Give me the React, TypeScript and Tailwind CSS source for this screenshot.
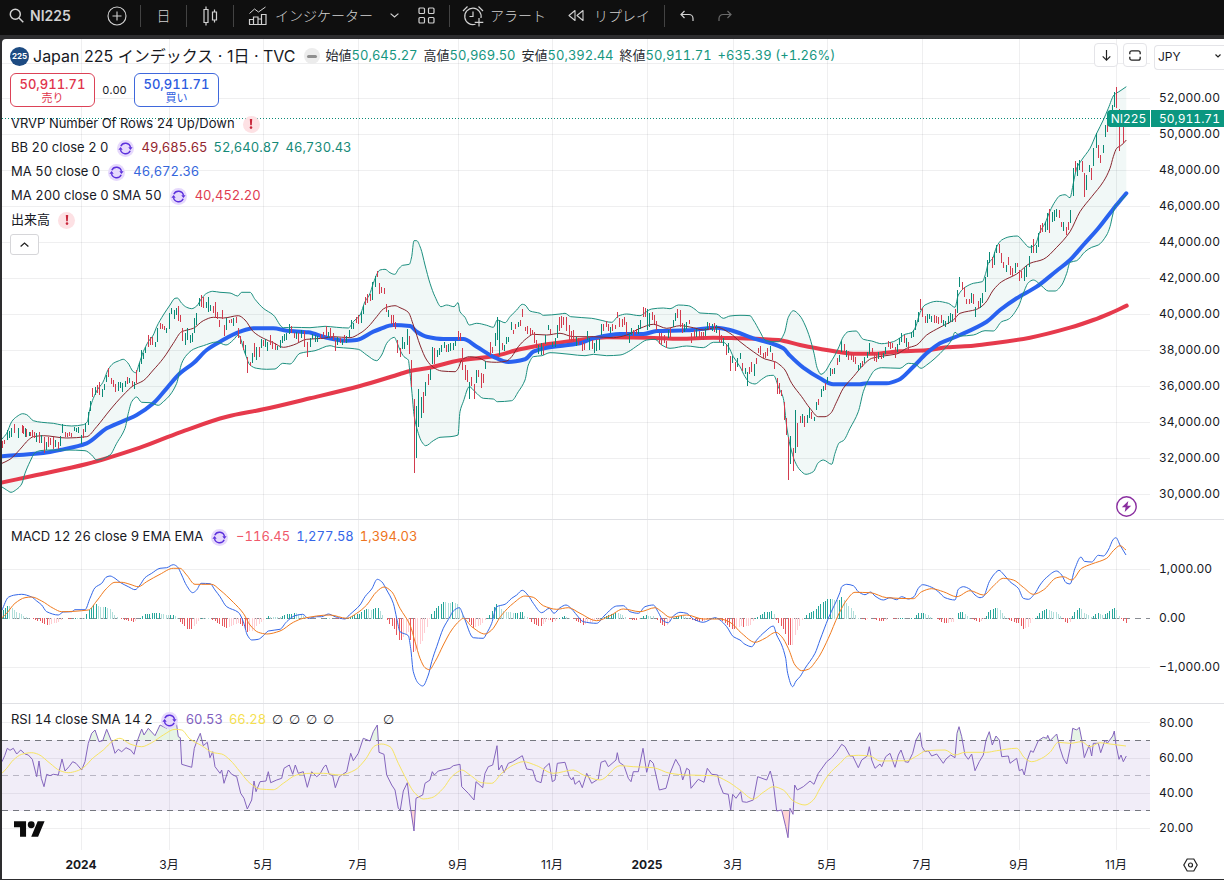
import React from 'react';

type Point = [number, number];
type Segment = [number, number, string];

/* Series are stored in thirds of a pixel, measured from each segment's origin. */
const decode = (segments: Segment[]): Point[] =>
  segments.flatMap(([ox, oy, data]) => {
    const n = data.trim().split(/[\s,]+/).map(Number);
    const out: Point[] = [];
    for (let i = 0; i + 1 < n.length; i += 2) out.push([ox + n[i] / 3, oy + n[i + 1] / 3]);
    return out;
  });

const toPath = (points: Point[]) =>
  points.map(([x, y], i) => `${i ? 'L' : 'M'}${x.toFixed(1)} ${y.toFixed(1)}`).join('');

/* Monotone cubic curve: rounds the corners without overshooting the samples. */
const toCurve = (points: Point[]) => {
  const n = points.length;
  const slope = points.slice(1).map(([x, y], i) => (y - points[i][1]) / (x - points[i][0] || 1));
  const tangent = points.map((_, i) => {
    if (i === 0) return slope[0];
    if (i === n - 1) return slope[n - 2];
    const a = slope[i - 1];
    const b = slope[i];
    return a * b <= 0 ? 0 : (2 * a * b) / (a + b);
  });
  let d = `M${points[0][0].toFixed(1)} ${points[0][1].toFixed(1)}`;
  for (let i = 1; i < n; i++) {
    const [x0, y0] = points[i - 1];
    const [x1, y1] = points[i];
    const h = (x1 - x0) / 3;
    d += `C${(x0 + h).toFixed(1)} ${(y0 + tangent[i - 1] * h).toFixed(1)} ${(x1 - h).toFixed(1)} ${(y1 - tangent[i] * h).toFixed(1)} ${x1.toFixed(1)} ${y1.toFixed(1)}`;
  }
  return d;
};

const valueAt = (points: Point[], x: number) => {
  for (let i = 1; i < points.length; i++) {
    const [x0, y0] = points[i - 1];
    const [x1, y1] = points[i];
    if (x <= x1) return y0 + ((y1 - y0) * (x - x0)) / (x1 - x0 || 1);
  }
  return points[points.length - 1][1];
};

const BARS: Segment[] = [
  [0, 260, 'r 8 543 565;r 14 540 553;g 22 510 540;g 28 512 535;g 34 505 530;r 42 492 520;g 55 505 533;r 66 495 520;r 70 497 522;g 75 505 530;r 80 508 530;g 87 515 528;r 92 515 528;r 97 510 530;r 103 515 533;g 109 520 545;r 118 515 550;g 125 525 550;r 133 530 578;g 140 545 570;r 146 530 560;r 152 535 555;r 160 530 568;g 166 540 562;r 174 545 568;g 180 528 558;g 187 492 520;r 196 515 532;r 202 518 530;r 208 515 528;r 213 518 530;g 222 500 513;g 229 503 515;g 235 500 520;g 245 525 553;r 250 508 535;g 257 490 515;g 265 457 495;g 272 423 453;r 278 385 410;g 285 380 405;r 291 375 400;r 298 365 405;g 307 388 412;g 313 372 390;g 319 345 365;r 325 325 350;r 334 353 372;r 340 360 382;r 346 372 395;g 355 365 392;g 361 365 385;g 368 370 397;g 376 362 382;r 382 352 372;g 388 355 368;r 396 363 378;g 403 365 387;r 409 330 368;g 418 308 335;g 425 270 312;g 431 280 298;g 437 262 280;r 446 225 260;r 451 230 255;r 457 232 255;g 466 245 262;g 472 205 245;r 480 190 208;r 487 192 206;r 493 198 210;g 499 203 220;g 508 160 208;g 515 145 162;g 522 150 178;g 528 145 165;r 535 138 182;r 541 165 186;r 547 205 243;g 556 218 255;g 563 205 240;g 570 225 248;g 577 218 245;g 584 175 218;g 590 160 195;g 599 115 137;r 605 105 140;r 611 112 145;g 619 125 145;g 626 110 155;g 631 135 152;r 640 138 158;r 646 125 175;r 652 155 177;r 658 180 200;r 667 150 178;r 673 195 227;g 680 175 210;r 688 180 190;r 694 178 190;g 700 175 198;r 710 170 190;r 715 205 235;r 722 228 252;r 730 243 270;g 736 255 285;r 742 290 338;r 750 305 318;g 757 280 308;r 763 250 290;g 770 262 300;r 778 262 292;g 785 237 265;r 791 240 258;g 797 237 262;g 803 245 272;r 810 225 255;r 818 243 268;r 825 248 270;g 832 258 270;g 840 240 265;g 847 228 250;g 853 222 243;g 860 218 240;g 867 192 222;r 874 198 218;r 882 218 235;g 889 215 237;r 896 220 245;g 905 210 235;r 914 212 262;r 922 245 290;g 931 235 262;g 938 222 238;g 945 225 245;g 953 228 245;r 962 222 238;r 970 215 232;r 979 198 228;g 985 215 235;r 992 205 235;r 1000 220 240;r 1006 240 272;g 1013 232 255;r 1020 233 250;g 1027 240 255;r 1034 225 245;g 1040 228 248;g 1047 210 232;g 1054 180 208;g 1061 190 208;r 1069 170 190;r 1076 165 192;g 1083 155 188;g 1090 138 162;r 1096 110 135;r 1103 103 128;r 1110 103 122;g 1118 65 120;g 1125 48 80;r 1132 33 50;r 1139 70 102'],
  [380, 230, 'r 4 172 188;r 13 175 193;r 20 222 247;g 26 240 260;r 34 255 282;r 41 255 290;r 46 275 298;r 52 330 368;r 61 355 380;g 68 322 357;g 74 335 358;g 82 298 345;r 88 318 373;r 94 390 470;r 103 507 728;g 109 527 683;g 115 478 590;g 124 500 563;r 130 487 550;g 136 457 497;r 145 432 465;g 152 418 450;g 157 350 402;r 163 353 402;g 172 360 380;g 179 355 375;g 185 345 365;g 193 335 355;r 200 345 367;g 206 342 365;g 212 338 362;g 220 340 360;g 227 333 348;r 235 303 330;r 241 308 333;r 247 355 420;r 256 405 450;r 262 420 455;g 268 455 508;r 274 440 468;r 283 463 507;g 289 420 458;r 295 420 440;r 305 430 475;r 310 432 460;g 317 393 418;r 331 335 375;r 337 350 370;g 346 310 348;g 352 262 330;g 358 270 375;r 367 340 360;g 373 345 363;g 379 320 342;g 385 322 335;g 394 275 300;r 400 300 312;r 406 283 298;g 415 275 292;r 421 270 288;r 427 237 260;r 436 290 303;r 442 288 312;r 450 295 315;r 457 300 315;r 463 305 338;r 469 330 355;g 475 345 372;g 484 340 375;r 490 340 375;g 496 315 342;g 505 285 300;r 511 298 312;g 518 335 350;g 526 325 352;g 533 285 325;r 539 260 302;r 545 258 295;r 551 262 285;r 560 260 302;r 568 285 330;r 574 302 332;r 580 300 335;g 588 320 348;r 596 325 345;r 607 335 362;r 614 340 360;g 622 303 330;g 628 325 360;r 636 330 358;g 643 338 370;g 650 330 362;g 657 328 360;g 665 283 315;r 671 283 303;r 679 272 290;r 685 282 302;g 691 292 308;r 697 283 303;r 706 285 298;r 713 247 265;r 719 263 292;r 727 268 292;r 733 262 285;r 740 275 312;g 748 310 340;g 755 295 315;r 761 300 318;r 769 298 312;g 775 285 312;g 782 270 297;r 791 232 260;r 797 235 262;g 803 237 300;g 809 250 290;r 817 245 270;r 823 255 283;r 829 272 300;r 838 310 343;r 845 310 345;r 852 315 340;r 859 333 355;g 865 300 325;r 871 295 322;g 880 270 292;g 886 250 272;r 893 237 265;r 901 240 290;r 907 280 308;g 913 283 305;g 920 275 298;r 928 270 282;r 935 310 338;r 942 300 325;g 949 298 322;r 957 302 325;r 964 305 328;r 970 305 330;g 976 293 318;g 983 275 298;r 989 280 300;g 996 283 302;r 1003 280 305;g 1010 285 310;r 1018 300 335;r 1024 315 340;g 1031 325 348;r 1039 345 375;g 1046 340 370;r 1051 378 422;g 1058 378 400;r 1066 395 422;g 1073 385 412;g 1081 370 388;r 1088 400 422;g 1095 415 432;g 1102 425 467;r 1109 412 432;r 1115 395 425;g 1123 403 437;r 1130 385 402;r 1135 355 370;r 1142 348 375;r 1150 368 385;r 1156 365 385;r 1163 355 378;g 1170 348 365;r 1178 370 390;r 1184 393 418;r 1193 445 492;r 1199 460 492'],
  [740, 230, 'r 124 480 498;r 133 515 570;r 139 565 615;r 145 620 750;g 151 617 702;r 160 655 722;g 166 540 668;r 172 578 650;r 181 558 580;g 187 552 578;r 193 558 592;g 202 555 578;g 208 533 565;r 215 545 568;g 223 560 573;g 229 515 540;r 235 508 525;g 244 477 502;g 250 468 482;r 256 460 480;g 262 440 458;g 271 415 438;r 277 418 433;g 283 413 433;r 292 385 405;g 298 375 397;g 305 333 365;r 313 342 362;g 319 360 380;r 326 363 390;r 334 372 390;r 340 375 395;r 347 380 403;g 355 405 423;g 361 400 415;r 367 392 410;g 373 380 400;g 381 365 385;g 388 338 372;r 396 355 375;r 403 370 392;r 409 372 395;g 415 365 388;r 423 368 388;g 430 370 385;g 437 350 372;r 445 333 352;r 451 335 358;r 458 338 355;r 466 350 385;g 473 342 365;g 478 325 345;g 485 310 335;r 492 315 340;g 499 325 350;r 506 335 360;g 513 305 325;g 520 300 320;g 527 270 300;g 535 245 275;r 541 207 240;r 548 235 260;r 556 258 280;g 562 253 278;g 569 252 268;g 575 257 275;r 582 255 280;r 589 258 280;r 596 260 282;r 604 255 278;g 610 270 288;g 617 272 290;g 625 258 283;g 632 250 275;g 638 252 275;r 646 237 275;g 653 180 250;g 658 142 170;r 667 157 180;r 673 172 200;r 680 208 222;r 688 208 222;g 694 188 218;r 700 192 222;g 706 230 260;r 715 212 235;g 721 205 235;g 727 188 218;g 736 140 185;g 742 90 140;g 748 65 98;r 757 82 115;g 763 65 105;g 770 45 68;r 778 42 70;r 784 68 100;r 790 95 115;g 799 105 127;r 805 82 105;r 811 108 135;r 817 113 138;g 825 98 130;r 832 100 112;r 838 120 152;r 845 122 145;g 853 115 152;g 859 105 140;g 868 78 112;g 873 45 70;r 880 28 68'],
  [960, 30, 'g 229 645 668;g 235 610 650;r 241 585 608;r 248 580 605;g 256 575 605;g 262 550 600;r 268 538 608;g 276 545 575;g 283 540 572;g 289 538 560;r 297 540 565;r 303 575 590;g 310 575 602;r 318 590 615;r 325 575 600;g 331 540 580;g 340 415 498;r 346 393 425;g 352 400 437;g 358 390 420;r 366 393 427;r 373 430 500;g 379 435 480;g 388 405 425;r 394 415 450;g 400 355 408;g 409 310 355;r 415 345 385;r 421 375 398;g 430 345 370;g 436 285 320;r 442 275 305;g 450 240 290;g 456 225 270;g 463 185 230;r 469 170 235;r 478 238 362;r 490 290 340'],
];

const barPath = (kind: string) =>
  BARS.map(([ox, oy, data]) =>
    data
      .split(';')
      .map((item) => item.trim().split(' '))
      .filter((item) => item[0] === kind)
      .map(([, x, top, bottom]) => {
        const px = ox + Math.floor(Number(x) / 3) + 0.5;
        return `M${px} ${Math.round(oy + Number(top) / 3)}V${Math.round(oy + Number(bottom) / 3)}`;
      })
      .join(''),
  ).join('');

const upper = decode([
  [0, 260, '6 537 20 520 35 485 50 470 68 461 80 464 100 482 125 487 160 490 185 495 215 498 250 494 262 485 270 445 280 415 293 388 308 368 325 328 340 310 355 303 370 298 383 308 400 335 407 338 418 310 430 275 445 245 460 225 470 200 490 165 510 135 525 115 532 114 545 130 560 142 575 146 590 138 605 115 620 100 638 94 660 97 690 99 713 108 725 97 750 97 765 118 790 145 820 165 850 203 880 202 930 203 975 199 1010 202 1045 204 1060 185 1080 165 1095 125 1108 105 1120 70 1132 40 1140 30 1155 28 1170 38 1183 43'],
  [380, 230, '45 133 55 118 68 106 88 103 95 80 102 32 110 32 122 55 135 105 150 160 165 200 183 230 200 225 222 230 234 218 240 245 255 262 268 285 290 280 320 286 340 292 352 270 375 278 390 260 410 240 427 223 435 225 450 243 480 250 490 256 540 252 555 250 572 260 635 265 660 270 695 277 715 258 740 252 780 257 795 248 815 237 850 234 870 236 895 225 925 227 945 238 960 249 1010 252 1030 265 1050 258 1080 256 1110 257 1120 270 1140 305 1155 330'],
  [740, 230, '90 335 115 335 133 310 145 262 160 242 180 258 195 285 210 325 222 370 232 415 243 433 255 425 270 400 285 375 297 350 310 320 325 305 348 303 370 328 395 333 425 341 460 335 478 325 495 313 515 308 527 290 540 248 555 225 590 214 625 220 645 232 655 195 675 172 700 160 727 155 737 130 745 100 758 85 770 50 785 30 810 20 832 18 850 35 868 52'],
  [960, 30, '225 645 240 605 255 580 270 543 285 515 300 497 315 494 330 503 340 460 350 415 365 390 390 355 410 310 430 270 445 235 462 195 480 183 499 170'],
]);

const lower = decode([
  [0, 260, '6 681 20 690 33 697 50 688 65 672 75 640 90 605 105 578 120 572 150 570 200 570 255 572 275 585 290 600 330 585 350 550 375 505 385 460 395 425 410 411 425 427 450 428 475 436 490 425 510 405 530 370 545 310 560 285 580 268 610 257 650 246 678 255 700 240 715 225 735 280 750 315 770 325 800 328 825 327 848 310 870 312 900 280 945 272 990 257 1010 262 1050 265 1075 268 1100 285 1130 302 1145 285 1160 250 1175 235 1183 232'],
  [380, 230, '52 340 60 360 72 380 85 390 90 430 95 480 103 560 115 610 125 635 137 647 160 632 180 622 210 620 234 615 240 545 250 515 268 470 285 485 310 505 340 507 352 515 395 512 415 485 435 450 445 405 460 380 485 377 510 368 570 373 615 377 640 373 680 377 720 375 745 365 775 345 800 330 825 328 845 345 870 355 920 348 970 353 1000 337 1030 337 1045 350 1060 380 1080 410 1095 440 1110 458 1125 462 1145 448 1165 437 1180 436'],
  [740, 230, '103 438 115 470 130 505 140 590 150 645 165 695 180 720 198 733 220 725 235 698 250 690 275 703 285 670 298 638 310 632 330 595 355 545 370 485 385 450 405 420 425 413 480 415 505 400 525 402 543 415 560 405 585 385 615 355 635 330 645 307 660 318 700 315 735 302 760 303 785 275 805 268 835 230 850 190 865 158 880 150 905 168 925 183 945 183 965 165 980 130'],
  [960, 30, '330 697 350 692 375 665 395 652 415 645 440 615 450 590 458 555 465 530 480 515 499 495'],
]);

const middle = decode([
  [0, 260, '6 610 30 598 60 568 85 540 100 530 130 527 200 534 260 530 290 500 330 450 370 405 400 377 430 362 460 330 490 295 520 250 545 215 580 205 610 182 640 172 670 174 715 167 735 180 760 215 790 235 820 248 850 262 880 255 920 238 970 235 1000 230 1050 233 1080 220 1105 200 1130 170 1150 147'],
  [380, 230, '25 230 45 227 60 233 85 247 100 285 120 345 140 390 160 412 185 423 225 425 235 415 245 390 268 380 300 385 320 395 350 397 380 393 395 380 415 350 440 325 460 313 500 315 540 310 580 320 640 320 700 323 740 315 780 295 820 283 860 295 900 287 940 293 970 300 1010 292 1050 310 1080 335 1120 365 1155 387 1185 395'],
  [740, 230, '120 405 135 420 155 460 185 500 210 535 235 560 255 560 272 550 290 515 310 475 340 440 370 405 395 385 430 378 470 372 500 355 530 345 560 315 600 292 640 270 660 250 710 238 735 220 760 180 785 155 830 132 870 100 910 88 950 52'],
  [960, 30, '330 605 360 545 395 500 430 455 450 415 460 380 470 355 485 345 499 330'],
]);

const ma200 = decode([
  [0, 260, '0 669 100 647 260 612 420 563 540 517 680 470 790 448 930 415 1080 378 1200 342'],
  [380, 230, '90 423 140 415 240 391 340 379 420 358 500 343 600 330 680 322 800 323 900 326 1000 323 1080 325'],
  [740, 230, '60 327 115 330 180 345 260 360 340 371 400 371 480 364 560 361 620 352 700 347 760 340 870 323 990 293 1060 270 1110 250 1160 227'],
]);

const ma50 = decode([
  [0, 260, '0 589 130 579 180 570 260 550 320 505 410 465 460 430 500 385 540 340 580 310 620 270 660 245 720 215 760 205 820 205 860 212 925 217 980 233 1040 242 1070 240 1120 215'],
  [380, 230, '0 297 40 285 90 288 110 305 140 320 190 327 250 327 290 350 340 380 385 396 435 388 460 365 500 353 600 340 640 325 720 312 790 312 830 303 920 301 1010 293 1050 300 1120 325'],
  [740, 230, '100 342 130 355 150 377 190 413 240 445 280 463 360 463 380 460 440 460 475 450 520 410 560 370 600 340 660 315 740 275 780 240 830 205 890 170 950 122 990 90 1030 45'],
  [960, 30, '415 595 460 537 480 512 499 490'],
]);

const macd = decode([
  [0, 515, '6 285 25 247 45 240 65 238 95 246 110 258 125 270 140 290 175 300 190 291 215 290 225 284 255 284 270 250 285 218 305 205 318 187 330 183 345 190 360 202 385 215 405 224 420 210 435 188 455 175 480 160 500 158 520 149 532 155 545 180 560 212 578 233 590 225 603 205 630 206 645 225 660 245 680 275 715 292 730 320 742 360 755 375 775 373 790 362 805 348 840 343 860 320 885 302 908 298 925 310 950 305 965 305 985 297 1005 305 1035 312 1048 300 1065 285 1080 270 1095 245 1115 222 1132 193 1145 200 1160 225 1180 265 1190 310 1200 350 1225 362 1232 400 1240 470 1255 505 1268 513 1285 480 1295 440 1310 395 1330 340 1350 305'],
  [420, 515, '100 288 118 278 130 302 160 368 190 370 200 355 215 325 230 275 255 268 275 250 290 240 307 226 325 242 340 265 365 293 388 280 402 295 420 278 438 270 455 282 470 300 490 320 530 325 555 300 590 273 610 272 630 290 655 295 675 275 700 270 715 292 730 318 745 323 760 303 780 292 800 295 820 312 850 322 885 308 900 315 920 335 940 365 960 375 975 388 995 395 1010 375 1035 350 1060 333 1070 360 1085 390 1097 430 1103 475 1118 515 1128 498 1140 485 1155 460 1185 415'],
  [820, 500, '0 420 25 355 60 277 65 260 80 253 100 257 115 275 135 284 152 276 165 288 190 300 210 293 230 299 245 290 265 297 282 290 295 265 308 254 335 262 355 275 375 293 405 300 415 268 430 260 450 268 465 285 480 293 490 290 508 245 525 220 537 211 550 222 570 245 595 265 610 295 625 298 645 280 660 255 680 232 710 213 725 225 738 248 750 252 765 205 783 171 793 184 815 186 835 166 850 168 865 150 880 118 888 113 900 135 918 165'],
]);

const signal = decode([
  [0, 515, '6 308 20 295 45 265 75 248 95 246 125 258 160 280 185 290 265 285 290 258 320 220 345 202 365 202 390 208 415 215 440 200 480 178 520 160 540 160 560 180 585 208 605 208 635 208 660 225 700 262 730 295 750 330 775 352 800 357 840 348 880 322 910 310 990 300 1040 310 1070 295 1100 270 1130 230 1152 216 1175 230 1200 280 1230 330 1245 380 1260 430 1275 458 1288 464 1305 440 1330 390 1355 345 1378 318'],
  [420, 515, '130 310 155 335 195 357 215 345 245 300 280 265 315 243 340 247 370 272 410 283 445 278 480 295 530 317 570 302 610 282 660 290 705 278 725 290 750 307 800 300 850 312 900 312 930 322 965 355 1005 382 1035 370 1068 352 1085 365 1105 400 1125 450 1145 467 1165 463 1190 435'],
  [820, 500, '0 465 25 415 55 345 80 300 105 277 150 278 200 293 280 296 305 275 335 266 370 275 410 290 450 272 490 285 520 258 550 235 580 240 610 262 640 283 670 270 710 233 730 230 755 240 785 205 815 192 860 175 880 152 900 137 918 150'],
]);

const rsi = decode([
  [0, 515, '6 740 14 722 22 700 30 706 40 700 50 717 62 705 75 717 85 720 97 733 105 765 110 785 117 738 124 790 132 815 140 778 150 782 160 778 175 780 186 732 195 768 207 755 218 740 228 745 245 765 255 740 265 685 275 655 285 645 297 680 308 677 320 643 335 680 345 715 355 703 365 710 378 698 392 705 402 718 412 678 425 642 432 660 445 640 465 662 480 630 500 640 515 625 528 615 535 665 541 668 545 748 575 757 583 700 592 675 601 655 610 692 622 682 630 728 638 710 645 755 660 775 665 765 672 805 685 765 695 778 710 785 722 835 732 850 742 882 755 855 762 798 768 830 780 800 798 798 805 770 812 803 830 795 845 790 852 760 868 750 878 778 886 750 895 775 910 770 922 817 935 770 950 785 960 777 972 755 978 750 988 778 998 782 1006 818 1018 785 1040 770 1052 715 1060 737 1075 715 1090 670 1110 678 1120 650 1132 630 1137 712 1152 718 1160 780 1175 810 1185 825 1195 880 1201 885 1210 828 1222 803 1230 870 1242 948 1248 850 1268 840 1275 805 1290 795 1297 770 1303 780 1315 768 1350 760'],
  [420, 515, '100 752 120 748 125 815 145 835 162 855 168 800 188 818 195 775 205 755 218 750 231 692 236 765 245 750 252 773 265 745 278 740 307 722 320 762 338 765 348 797 363 803 372 760 388 745 397 800 405 795 412 745 435 742 448 785 455 795 460 787 465 808 478 797 487 818 500 775 515 805 535 792 543 742 556 737 565 755 588 735 592 713 598 742 612 752 625 790 633 800 640 770 655 770 669 700 680 772 690 735 700 745 718 825 738 820 750 775 767 733 780 755 788 795 800 760 808 765 813 820 835 793 852 802 862 760 875 778 893 780 898 805 910 835 925 838 932 885 938 838 948 850 962 830 967 860 980 862 1000 855 1013 785 1040 795 1051 768 1060 805 1070 888 1085 885 1097 935 1104 968 1110 880 1119 898 1124 810 1132 825 1150 815 1170 798 1182 808 1195 775'],
  [820, 500, '0 813 20 785 35 773 50 755 65 733 75 740 90 768 98 768 115 803 125 780 142 768 148 740 155 780 165 805 180 792 185 800 197 770 210 760 225 802 235 765 243 750 255 785 265 787 278 760 288 720 300 698 306 740 315 755 325 752 335 768 350 762 370 790 378 777 392 765 405 773 411 700 417 680 425 710 435 765 445 778 455 762 465 812 478 785 490 765 498 720 508 695 517 735 528 708 538 720 545 770 565 768 570 790 590 775 598 812 607 808 613 825 622 780 632 752 640 757 655 722 670 712 680 715 683 706 690 722 710 702 720 745 730 775 740 792 750 745 758 685 770 690 778 682 785 718 793 773 808 735 815 768 820 730 835 730 842 758 855 720 862 730 878 708 883 693 888 735 897 778 903 765 910 785 919 768'],
]);

const rsiAverage = decode([
  [0, 515, '6 775 20 760 40 735 65 718 95 713 115 718 150 745 180 767 205 773 230 768 250 758 280 728 310 705 340 677 360 670 390 687 425 695 455 683 490 660 525 643 545 645 570 672 605 692 640 713 665 717 690 735 720 770 750 805 780 822 820 824 850 805 890 780 930 775 970 775 1020 780 1065 765 1095 735 1125 692 1145 687 1170 695 1195 745 1215 785 1245 835 1270 852 1295 848 1330 820 1355 785 1378 768'],
  [420, 515, '125 765 150 780 185 803 215 805 245 775 280 750 310 740 350 752 400 775 460 765 490 780 540 795 600 752 640 755 700 758 750 775 800 780 880 782 920 798 960 825 1000 852 1030 832 1060 815 1090 825 1120 858 1155 870 1180 855'],
  [820, 500, '0 865 25 825 60 790 85 768 115 766 150 768 180 783 260 782 290 768 320 752 375 750 405 765 435 757 500 757 530 752 590 745 615 775 635 785 665 775 690 757 715 727 750 730 785 725 810 740 840 728 870 732 918 738'],
]);

const GRID_X = [81, 169, 263, 358, 458, 552, 647, 733, 827, 922, 1019, 1116];
const MONTHS = ['2024', '3月', '5月', '7月', '9月', '11月', '2025', '3月', '5月', '7月', '9月', '11月'];
const PLOT_LEFT = 2;
const PLOT_RIGHT = 1150;

const ticks = [PLOT_LEFT, ...GRID_X, PLOT_RIGHT];
const tickColumns = ticks
  .slice(1)
  .map((x, i) => `minmax(0,${x - ticks[i]}fr)`)
  .join(' ');

type HistogramTone = 'rise' | 'riseFade' | 'fall' | 'fallFade';
const TONES: Record<HistogramTone, string> = {
  rise: '#26a69a',
  riseFade: '#b2dfdb',
  fall: '#e8595f',
  fallFade: '#ffcdd2',
};
const ZERO = 618;
const histogram = (() => {
  const paths: Record<HistogramTone, string> = { rise: '', riseFade: '', fall: '', fallFade: '' };
  let previous = 0;
  for (let i = 0; i < 483; i++) {
    const x = 3 + i * 2.33;
    const h = valueAt(signal, x) - valueAt(macd, x);
    const tone: HistogramTone = h >= 0 ? (h >= previous ? 'rise' : 'riseFade') : h < previous ? 'fall' : 'fallFade';
    const rounded = Math.round(h);
    if (rounded !== 0) paths[tone] += `M${Math.floor(x) + 0.5} ${ZERO + (h < 0 ? 0 : 1)}V${ZERO - rounded + (h < 0 ? 0 : 1)}`;
    previous = h;
  }
  return paths;
})();

function Plot({ top, height, rows, children }: { top: number; height: number; rows: number[]; children: React.ReactNode }) {
  return (
    <svg
      className="absolute inset-0 h-full w-full"
      viewBox={`${PLOT_LEFT} ${top} ${PLOT_RIGHT - PLOT_LEFT} ${height}`}
      preserveAspectRatio="none"
      fill="none"
      aria-hidden="true"
    >
      <g stroke="#2a2e39" strokeOpacity="0.075" shapeRendering="crispEdges">
        {GRID_X.map((x) => (
          <path key={x} d={`M${x + 0.5} ${top}v${height}`} />
        ))}
        {rows.map((y) => (
          <path key={y} d={`M${PLOT_LEFT} ${y + 0.5}H${PLOT_RIGHT}`} />
        ))}
      </g>
      {children}
    </svg>
  );
}

function PricePlot() {
  return (
    <Plot top={39} height={480} rows={[63, 98, 134, 170, 206, 242, 278, 314, 350, 386, 422, 458, 494]}>
      <path d={`${toPath(upper)}${toPath([...lower].reverse()).replace('M', 'L')}Z`} fill="#08836f" fillOpacity="0.055" />
      <path d={toCurve(ma200)} stroke="#e63a4c" strokeWidth="4" strokeLinejoin="round" strokeLinecap="round" />
      <path d={toCurve(ma50)} stroke="#2962f0" strokeWidth="4" strokeLinejoin="round" strokeLinecap="round" />
      <path d={toCurve(upper)} stroke="#1c8f7f" />
      <path d={toCurve(lower)} stroke="#1c8f7f" />
      <path d={toCurve(middle)} stroke="#87262e" />
      <g shapeRendering="crispEdges">
        <path d={barPath('g')} stroke="#0a8a76" />
        <path d={barPath('r')} stroke="#d23b4e" />
        <path d="M2 118.5H1107" stroke="#0a8a76" strokeDasharray="1 2" />
      </g>
    </Plot>
  );
}

function MacdPlot() {
  return (
    <Plot top={520} height={183} rows={[569, 667]}>
      <path d="M2 618.5H1150" stroke="#8a8d94" strokeDasharray="6 5" shapeRendering="crispEdges" />
      <g shapeRendering="crispEdges">
        {(Object.keys(TONES) as HistogramTone[]).map((tone) => (
          <path key={tone} d={histogram[tone]} stroke={TONES[tone]} />
        ))}
      </g>
      <path d={toCurve(macd)} stroke="#3568e8" />
      <path d={toCurve(signal)} stroke="#f07a1e" />
    </Plot>
  );
}

function RsiPlot() {
  const line = toPath(rsi);
  const area = (level: number) => `${line}V${level}H2Z`;
  return (
    <Plot top={704} height={146} rows={[722, 758, 793, 828]}>
      <defs>
        <clipPath id="overbought">
          <rect x="2" y="704" width="1148" height="36" />
        </clipPath>
        <clipPath id="oversold">
          <rect x="2" y="811" width="1148" height="39" />
        </clipPath>
      </defs>
      <rect x="2" y="740" width="1148" height="71" fill="#7e57c2" fillOpacity="0.11" />
      <path d={area(740)} fill="#4caf50" fillOpacity="0.14" clipPath="url(#overbought)" />
      <path d={area(811)} fill="#ff5252" fillOpacity="0.25" clipPath="url(#oversold)" />
      <g strokeDasharray="6 5" shapeRendering="crispEdges">
        <path d="M2 740.5H1150" stroke="#75777f" />
        <path d="M2 775.5H1150" stroke="#b9b6c4" />
        <path d="M2 810.5H1150" stroke="#75777f" />
      </g>
      <path d={line} stroke="#8465bd" />
      <path d={toCurve(rsiAverage)} stroke="#f7e463" />
    </Plot>
  );
}

function RefreshBadge() {
  return (
    <svg className="size-[17px] shrink-0" viewBox="0 0 17 17" fill="none" aria-hidden="true">
      <circle cx="8.5" cy="8.5" r="8.5" fill="#e6d9fc" />
      <path d="M3.800 6.300a5.100 5.100 0 0 1 9.700 1.200M13.200 10.700a5.100 5.100 0 0 1-9.700-1.200" stroke="#5b30dc" strokeWidth="1.400" />
      <path d="M11.300 7.200h4.300l-2.200 2.700zM5.700 9.800H1.400l2.200-2.700z" fill="#5b30dc" />
    </svg>
  );
}

function ErrorBadge() {
  return (
    <span className="flex size-[17px] shrink-0 items-center justify-center rounded-full bg-[#fde1e4]">
      <svg className="h-[10px] w-[4px]" viewBox="0 0 4 10" fill="#c8283c" aria-hidden="true">
        <path d="M.8 0h2.4l-.4 6.2H1.2z" />
        <circle cx="2" cy="8.6" r="1.3" />
      </svg>
    </span>
  );
}

function LegendRow({ title, badge, values = [], children }: { title: string; badge: 'refresh' | 'error'; values?: [string, string][]; children?: React.ReactNode }) {
  return (
    <div className="flex h-6 items-center whitespace-nowrap text-[13px] tabular-nums">
      <span className="mr-2 pl-px">{title}</span>
      {badge === 'refresh' ? <RefreshBadge /> : <ErrorBadge />}
      <span className="ml-2 flex gap-[6px]">
        {values.map(([text, tone], i) => (
          <span key={i} className={tone}>
            {text}
          </span>
        ))}
      </span>
      {children}
    </div>
  );
}

const EmptyValue = () => <span className="w-[17px] text-center font-['DejaVu_Sans',sans-serif] text-[13px]">∅</span>;

const OHLC = [
  ['始値', '50,645.27'],
  ['高値', '50,969.50'],
  ['安値', '50,392.44'],
  ['終値', '50,911.71'],
];

function MainLegend() {
  return (
    <div className="absolute left-2 top-[3px]">
      <div className="flex h-7 items-center whitespace-nowrap">
        <span className="flex size-[19px] items-center justify-center rounded-full bg-[#1d4b82] text-[8px] font-bold text-white">225</span>
        <h1 className="ml-1 text-[16px]">Japan 225 インデックス · 1日 · TVC</h1>
        <span className="ml-2 flex size-4 items-center justify-center rounded-full bg-[#ececec]">
          <span className="h-[3px] w-[10px] rounded-full bg-[#8f8f8f]" />
        </span>
        <div className="ml-[6px] flex gap-[6px] text-[13px] tabular-nums text-[#16967f]">
          {OHLC.map(([label, value]) => (
            <span key={label}>
              <span className="text-[#2a2c33]">{label}</span>
              {value}
            </span>
          ))}
          <span>+635.39 (+1.26%)</span>
        </div>
      </div>
      <div className="mt-[3px] flex items-center tabular-nums">
        <button className="h-[34px] w-[85px] rounded-md border border-[#dc4257] bg-white text-[#e0334b]">
          <span className="block text-[13px] font-medium leading-4">50,911.71</span>
          <span className="block text-[11px] leading-3">売り</span>
        </button>
        <span className="w-[39px] text-center text-[11px]">0.00</span>
        <button className="h-[34px] w-[85px] rounded-md border border-[#3f68dc] bg-white text-[#2c5be0]">
          <span className="block text-[13px] font-medium leading-4">50,911.71</span>
          <span className="block text-[11px] leading-3">買い</span>
        </button>
      </div>
      <div className="mt-[5px]">
        <LegendRow title="VRVP Number Of Rows 24 Up/Down" badge="error" />
        <LegendRow
          title="BB 20 close 2 0"
          badge="refresh"
          values={[
            ['49,685.65', 'text-[#93262e]'],
            ['52,640.87', 'text-[#158a78]'],
            ['46,730.43', 'text-[#158a78]'],
          ]}
        />
        <LegendRow title="MA 50 close 0" badge="refresh" values={[['46,672.36', 'text-[#3566dc]']]} />
        <LegendRow title="MA 200 close 0 SMA 50" badge="refresh" values={[['40,452.20', 'text-[#e03c50]']]} />
        <LegendRow title="出来高" badge="error" />
      </div>
      <button aria-label="凡例を折りたたむ" className="mt-0.5 flex h-[21px] w-[29px] items-center justify-center rounded-[3px] border border-[#d6d6d9] bg-white">
        <svg className="h-[5px] w-[9px]" viewBox="0 0 9 5" fill="none" stroke="#222" strokeWidth="1.3" aria-hidden="true">
          <path d="M.6 4.4 4.5 1l3.9 3.4" />
        </svg>
      </button>
    </div>
  );
}

function Axis({ labels, className }: { labels: string[]; className: string }) {
  return (
    <div className={`flex w-[74px] shrink-0 flex-col pl-[9px] text-[12px] tabular-nums ${className}`}>
      {labels.map((label) => (
        <span key={label} className="flex flex-1 items-center">
          {label}
        </span>
      ))}
    </div>
  );
}

const Divider = () => <span className="h-[22px] w-px shrink-0 bg-[#434343]" />;

function Toolbar() {
  return (
    <header className="flex h-[35px] shrink-0 items-center bg-[#0f0f0f] pb-1 text-[14px] text-[#d2d2d2]">
      <button className="flex w-[93px] items-center gap-[6px] pl-[9px] font-semibold">
        <svg className="size-[15px]" viewBox="0 0 15 15" fill="none" stroke="currentColor" strokeWidth="1.5" aria-hidden="true">
          <circle cx="6.3" cy="6.3" r="5" />
          <path d="m10 10 4.3 4.3" />
        </svg>
        <span>NI225</span>
      </button>
      <button aria-label="シンボルを比較" className="flex w-[47px] justify-center">
        <svg className="size-[20px]" viewBox="0 0 20 20" fill="none" stroke="currentColor" strokeWidth="1.1" aria-hidden="true">
          <circle cx="10" cy="10" r="9" />
          <path d="M10 5.5v9M5.5 10h9" />
        </svg>
      </button>
      <Divider />
      <button className="w-[45px] font-light">日</button>
      <Divider />
      <button aria-label="ローソク足" className="flex w-[46px] justify-center">
        <svg className="h-[20px] w-[16px]" viewBox="0 0 16 20" fill="none" stroke="currentColor" strokeWidth="1.2" aria-hidden="true">
          <path d="M2 3.5h4v13H2zM4 .5v3M4 16.5v3M10.500 6h4v8h-4zM12.500 3.500V6M12.500 14v2.500" />
        </svg>
      </button>
      <Divider />
      <button className="flex items-center gap-[7px] pl-[14px] font-light">
        <svg className="size-[20px]" viewBox="0 0 20 20" fill="none" stroke="currentColor" strokeWidth="1.2" aria-hidden="true">
          <path d="M1.500 18.500v-5h4v5M5.500 13.500v-2.500h4.500v7.500M10 13h3.500v5.500M13.500 13V8.500h4.500v10M1 18.500h17.500" />
          <path d="m1.500 7.500 5-4.500 4 3L17.500 1" strokeWidth="1" />
        </svg>
        <span className="whitespace-nowrap">インジケーター</span>
      </button>
      <button aria-label="お気に入りのインジケーター" className="ml-1 flex w-[34px] justify-center">
        <svg className="h-[5px] w-[9px]" viewBox="0 0 9 5" fill="none" stroke="currentColor" strokeWidth="1.2" aria-hidden="true">
          <path d="M.6.6 4.5 4 8.400.6" />
        </svg>
      </button>
      <button aria-label="テンプレート" className="mr-[8px] flex w-[30px] justify-center">
        <svg className="size-[17px]" viewBox="0 0 17 17" fill="none" stroke="currentColor" strokeWidth="1.2" aria-hidden="true">
          <rect x="1" y="1" width="5.500" height="5.500" rx="1" />
          <rect x="10.500" y="1" width="5.500" height="5.500" rx="1" />
          <rect x="1" y="10.500" width="5.500" height="5.500" rx="1" />
          <rect x="10.500" y="10.500" width="5.500" height="5.500" rx="1" />
        </svg>
      </button>
      <Divider />
      <button className="flex items-center gap-[6px] pl-3 font-light">
        <svg className="size-[22px]" viewBox="0 0 22 22" fill="none" stroke="currentColor" strokeWidth="1.2" aria-hidden="true">
          <path d="M13.500 19.200A8.200 8.200 0 1 1 19 13" />
          <path d="M11 6.500v5H7.500M1 6l4.500-4.500M16.500 1.500 21 6M17 13v8.500M12.700 17.300h8.600" />
        </svg>
        <span className="whitespace-nowrap">アラート</span>
      </button>
      <button className="ml-[22px] flex items-center gap-[9px] font-light">
        <svg className="h-[13px] w-[17px]" viewBox="0 0 17 13" fill="none" stroke="currentColor" strokeWidth="1.1" strokeLinejoin="round" aria-hidden="true">
          <path d="M7 1.500v10l-6-5zM15 1.500v10l-6-5z" />
        </svg>
        <span className="whitespace-nowrap">リプレイ</span>
      </button>
      <span className="w-[14px]" />
      <Divider />
      <button aria-label="元に戻す" className="flex w-[44px] justify-center">
        <svg className="h-[12px] w-[14px]" viewBox="0 0 14 12" fill="none" stroke="currentColor" strokeWidth="1.2" aria-hidden="true">
          <path d="M4.500 1 1 4.500 4.500 8M1.300 4.500H9a4 4 0 0 1 4 4V11" />
        </svg>
      </button>
      <button aria-label="やり直す" className="flex w-[32px] justify-center text-[#6a6a6a]">
        <svg className="h-[12px] w-[14px]" viewBox="0 0 14 12" fill="none" stroke="currentColor" strokeWidth="1.2" aria-hidden="true">
          <path d="M9.500 1 13 4.500 9.500 8M12.700 4.500H5a4 4 0 0 0-4 4V11" />
        </svg>
      </button>
    </header>
  );
}

function ChartControls() {
  return (
    <div className="absolute right-0 top-1 flex items-start">
      <button aria-label="下へ移動" className="mr-[5px] flex size-6 items-center justify-center rounded border border-[#e4e4e8] bg-white">
        <svg className="h-[11px] w-[9px]" viewBox="0 0 9 11" fill="none" stroke="#222" strokeWidth="1.2" aria-hidden="true">
          <path d="M4.500 0v10M.7 6.300l3.800 3.800 3.800-3.800" />
        </svg>
      </button>
      <button aria-label="全画面" className="mr-[7px] flex size-6 items-center justify-center rounded border border-[#e4e4e8] bg-white">
        <svg className="h-[11px] w-[12px]" viewBox="0 0 12 11" fill="none" stroke="#222" strokeWidth="1.300" aria-hidden="true">
          <path d="M.8 4.200V2.800A2 2 0 0 1 2.800.8h6.400a2 2 0 0 1 2 2v1.400M11.200 6.800v1.400a2 2 0 0 1-2 2H2.800a2 2 0 0 1-2-2V6.800" />
        </svg>
      </button>
      <div className="relative w-[70px]">
        <select
          aria-label="通貨"
          className="h-[25px] w-full appearance-none rounded-l border border-r-0 border-[#e4e4e8] bg-white pl-[3px] pr-3 text-[12px] leading-4"
          defaultValue="JPY"
        >
          <option>JPY</option>
          <option>USD</option>
        </select>
        <svg className="pointer-events-none absolute right-[3px] top-[11px] h-[4px] w-[6px]" viewBox="0 0 6 4" fill="none" stroke="#222" strokeWidth="1.200" aria-hidden="true">
          <path d="m.5.500 2.500 2.500L5.500.5" />
        </svg>
      </div>
    </div>
  );
}

export default function App() {
  return (
    <div className="flex h-screen flex-col bg-[#2d2d2f] font-['Inter','Noto_Sans_CJK_JP',sans-serif] text-[#17191f]">
      <Toolbar />
      <main className="mb-px ml-[2px] mt-1 grid min-h-0 flex-1 grid-rows-[480fr_184fr_147fr_29px] overflow-hidden rounded-tl bg-white">
        <section className="relative flex min-h-0">
          <div className="relative min-w-0 flex-1">
            <PricePlot />
            <MainLegend />
            <button aria-label="イベント" className="absolute bottom-[2px] right-[13px]">
              <svg className="size-[21px]" viewBox="0 0 21 21" aria-hidden="true">
                <circle cx="10.500" cy="10.500" r="9.700" fill="#fff" stroke="#8a2fa0" strokeWidth="1.400" />
                <path d="M12.300 5 5.800 11.300h3.800L8.700 16l6.500-6.300h-3.800z" fill="#8a2fa0" />
              </svg>
            </button>
          </div>
          <Axis
            className="pb-[7px] pt-[41px]"
            labels={['52,000.00', '50,000.00', '48,000.00', '46,000.00', '44,000.00', '42,000.00', '40,000.00', '38,000.00', '36,000.00', '34,000.00', '32,000.00', '30,000.00']}
          />
          <ChartControls />
          <div className="absolute right-0 top-[71px] flex h-[17px] gap-px text-[12px] leading-[17px] tabular-nums text-white">
            <span className="w-[43px] rounded-l-sm bg-[#0b9780] text-center">NI225</span>
            <span className="w-[73px] bg-[#0b9780] pl-2">50,911.71</span>
          </div>
        </section>
        <section className="flex min-h-0 border-t border-[#dfe0e4]">
          <div className="relative min-w-0 flex-1">
            <MacdPlot />
            <div className="absolute left-2 top-[5px]">
              <LegendRow
                title="MACD 12 26 close 9 EMA EMA"
                badge="refresh"
                values={[
                  ['−116.45', 'text-[#f0596a]'],
                  ['1,277.58', 'text-[#3566e8]'],
                  ['1,394.03', 'text-[#ee7420]'],
                ]}
              />
            </div>
          </div>
          <Axis className="pb-3 pt-6" labels={['1,000.00', '0.00', '−1,000.00']} />
        </section>
        <section className="flex min-h-0 border-t border-[#dfe0e4]">
          <div className="relative min-w-0 flex-1">
            <RsiPlot />
            <div className="absolute left-2 top-1">
              <LegendRow
                title="RSI 14 close SMA 14 2"
                badge="refresh"
                values={[
                  ['60.53', 'text-[#8060c0]'],
                  ['66.28', 'text-[#f5e050]'],
                ]}
              >
                <span className="ml-[3px] flex">
                  <EmptyValue />
                  <EmptyValue />
                  <EmptyValue />
                  <EmptyValue />
                </span>
                <span className="ml-[43px] flex">
                  <EmptyValue />
                </span>
              </LegendRow>
            </div>
            <svg className="absolute bottom-[13px] left-3 h-[16px] w-[31px]" viewBox="0 4 36 18" fill="#0c0c0c" aria-label="TradingView">
              <path d="M14 22H7V11H0V4h14zM28 22h-8l7.500-18h8z" />
              <circle cx="20" cy="8" r="4" />
            </svg>
          </div>
          <Axis className="pb-[5px] pt-px" labels={['80.00', '60.00', '40.00', '20.00']} />
        </section>
        <footer className="flex items-center pt-px text-[12px]">
          <div className="grid min-w-0 flex-1" style={{ gridTemplateColumns: tickColumns }}>
            <span />
            {MONTHS.map((label, i) => (
              <span key={i} className={`-translate-x-1/2 justify-self-start whitespace-nowrap ${label.startsWith('20') ? 'font-bold' : ''}`}>
                {label}
              </span>
            ))}
          </div>
          <div className="flex w-[74px] justify-center pl-[6px]">
            <button aria-label="時間軸の設定">
              <svg className="h-[14px] w-[15px]" viewBox="0 0 15 14" fill="none" stroke="#222" strokeWidth="1.200" aria-hidden="true">
                <path d="M4.200 1h6.600l3.400 6-3.400 6H4.200L.8 7z" />
                <circle cx="7.500" cy="7" r="2" />
              </svg>
            </button>
          </div>
        </footer>
      </main>
    </div>
  );
}
